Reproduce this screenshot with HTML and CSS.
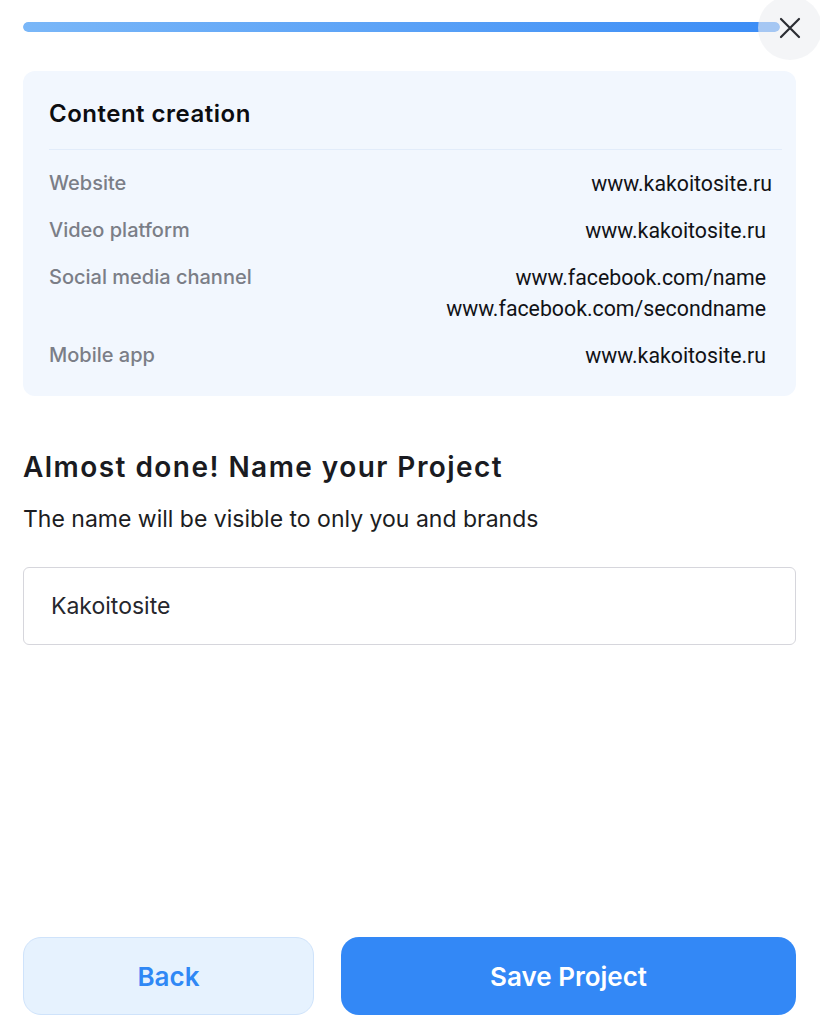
FILE: index.html
```html
<!DOCTYPE html>
<html>
<head>
<meta charset="utf-8">
<link rel="stylesheet" href="styles.css">
</head>
<body>
<div class="page">
  <div class="topbar">
    <div class="progress"><div class="progress-fill"></div></div>
    <button class="close" aria-label="Close">
      <svg width="22" height="22" viewBox="0 0 22 22"><path d="M2 2 L20 20 M20 2 L2 20" stroke="#2b2d33" stroke-width="2.2" stroke-linecap="round" fill="none"/></svg>
    </button>
  </div>

  <section class="card">
    <h2 class="card-title">Content creation</h2>
    <div class="rows">
      <div class="row"><span class="label">Website</span><span class="value v1">www.kakoitosite.ru</span></div>
      <div class="row"><span class="label">Video platform</span><span class="value">www.kakoitosite.ru</span></div>
      <div class="row"><span class="label">Social media channel</span><span class="value">www.facebook.com/name<br>www.facebook.com/secondname</span></div>
      <div class="row"><span class="label">Mobile app</span><span class="value">www.kakoitosite.ru</span></div>
    </div>
  </section>

  <h1 class="heading">Almost done! Name your Project</h1>
  <p class="sub">The name will be visible to only you and brands</p>
  <div class="input">Kakoitosite</div>

  <div class="spacer"></div>

  <div class="actions">
    <button class="btn back">Back</button>
    <button class="btn save">Save Project</button>
  </div>
</div>
</body>
</html>
```

FILE: styles.css
```css
html, body {
  margin: 0;
  padding: 0;
  background: #ffffff;
}
body {
  font-family: Inter, "Liberation Sans", sans-serif;
  width: 820px;
  height: 1036px;
  overflow: hidden;
}
.page {
  height: 1036px;
  padding: 0 24px 0 23px;
  box-sizing: border-box;
  display: flex;
  flex-direction: column;
}
.topbar {
  position: relative;
  height: 71px;
  padding-top: 22px;
  box-sizing: border-box;
}
.progress {
  width: 757px;
  height: 10px;
  border-radius: 5px;
  background: #e6f0fd;
  overflow: hidden;
}
.progress-fill {
  width: 100%;
  height: 100%;
  border-radius: 5px;
  background: linear-gradient(90deg, #7ab7f8 0%, #3a8cf6 100%);
}
.close {
  position: absolute;
  left: 735px;
  top: -4px;
  width: 64px;
  height: 64px;
  border-radius: 50%;
  border: none;
  background: rgba(236, 238, 242, 0.6);
  display: flex;
  align-items: center;
  justify-content: center;
  padding: 0;
}
.card {
  background: #f2f7fe;
  border-radius: 12px;
  padding: 28px 14px 24px 26px;
  height: 325px;
  box-sizing: border-box;
}
.card-title {
  margin: 0;
  font-family: Inter, sans-serif;
  font-weight: 600;
  font-size: 24px;
  letter-spacing: 0.5px;
  line-height: 30px;
  color: #0c0d10;
  padding-bottom: 20px;
  border-bottom: 1px solid #e2ecfa;
}
.rows {
  padding-top: 18px;
  padding-right: 14px;
  display: flex;
  flex-direction: column;
  gap: 16px;
}
.row {
  display: flex;
  justify-content: space-between;
  align-items: flex-start;
}
.label {
  font-family: Inter, sans-serif;
  font-weight: 500;
  font-size: 20px;
  line-height: 30px;
  color: #7b7e87;
}
.value {
  font-family: Roboto, sans-serif;
  font-size: 21.3px;
  line-height: 31px;
  color: #111216;
  text-align: right;
  padding-right: 2px;
}
.value.v1 {
  padding-right: 0;
  margin-right: -4px;
}
.heading {
  margin: 52px 0 0 0;
  font-family: Inter, sans-serif;
  font-weight: 600;
  font-size: 28px;
  line-height: 38px;
  color: #1a1b21;
  letter-spacing: 1.45px;
}
.sub {
  margin: 18px 0 0 0;
  font-size: 23px;
  line-height: 30px;
  color: #1c1d22;
}
.input {
  margin-top: 33px;
  height: 78px;
  box-sizing: border-box;
  border: 1.5px solid #d6d6dc;
  border-radius: 6px;
  padding: 0 27px;
  display: flex;
  align-items: center;
  font-size: 23px;
  color: #26272d;
}
.spacer {
  flex: 1;
}
.actions {
  display: flex;
  gap: 27px;
  margin-bottom: 21px;
}
.btn {
  height: 78px;
  border-radius: 18px;
  font-family: Inter, sans-serif;
  font-weight: 600;
  font-size: 26px;
  cursor: pointer;
}
.back {
  width: 291px;
  background: #e6f2fe;
  border: 1.5px solid #cfe3fb;
  color: #2f88f5;
}
.save {
  flex: 1;
  background: #3388f6;
  border: none;
  color: #ffffff;
}
```
